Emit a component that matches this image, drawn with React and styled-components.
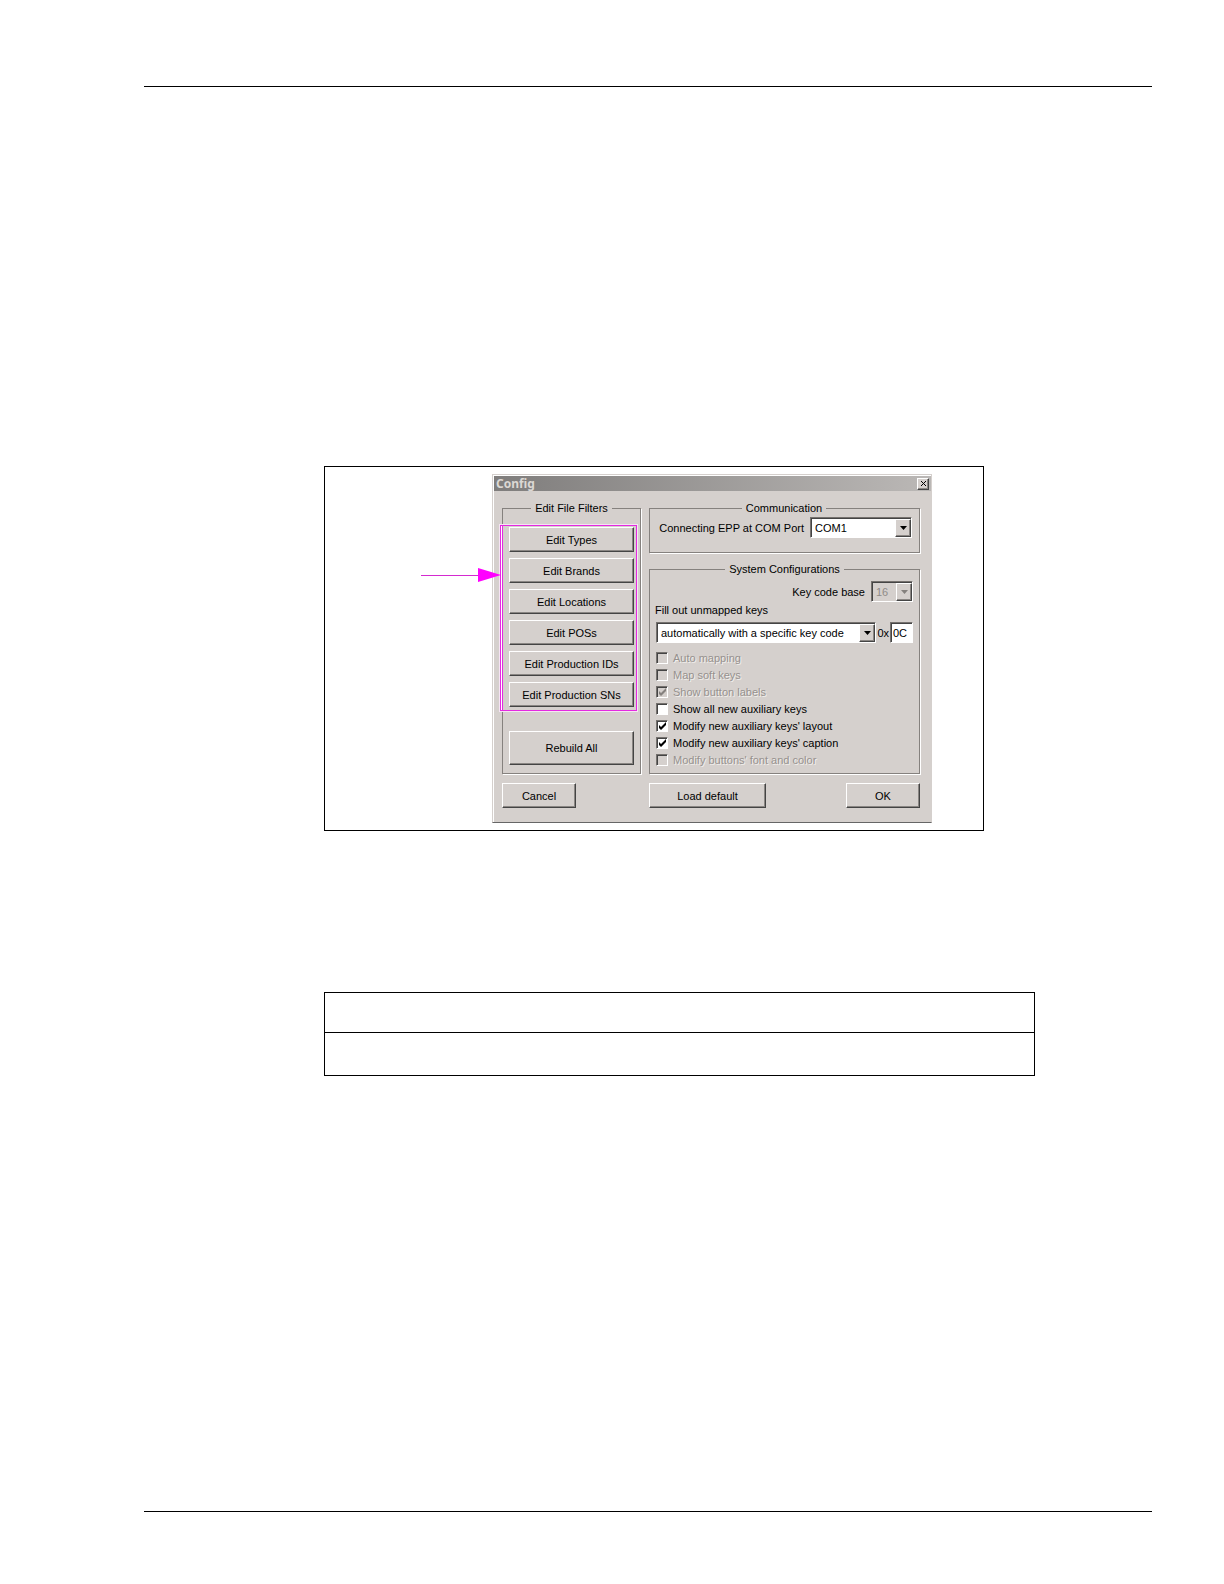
import {useState} from 'react'
import styled, {createGlobalStyle, css} from 'styled-components'

const GlobalStyle = createGlobalStyle`
  * {
    box-sizing: border-box;
  }

  body {
    margin: 0;
    background: #fff;
    color: #000;
    font-family: 'Liberation Sans', Arial, sans-serif;
    font-size: 11px;
    line-height: 14px;
  }

  button, input, select {
    font: inherit;
    color: inherit;
    margin: 0;
    border-radius: 0;
  }
`

const raised = css`
  border: 1px solid;
  border-color: #fff #444 #444 #fff;
  box-shadow: inset -1px -1px 0 #8a8683;
`

const sunken = css`
  border: 1px solid;
  border-color: #75716e #fff #fff #75716e;
  box-shadow: inset 1px 1px 0 #444;
`

const Page = styled.main`
  display: flex;
  flex-direction: column;
  min-height: 100vh;
  padding: 86px 72px 72px 144px;
`

const Rule = styled.hr`
  width: 100%;
  margin: 0;
  border: 0;
  border-top: 1px solid #000;
`

const Content = styled.div`
  flex: 1;
  padding: 379px 117px 0 180px;
`

const Figure = styled.figure`
  display: flex;
  justify-content: flex-end;
  margin: 0 51px 161px 0;
  padding: 7px 51px 7px 0;
  border: 1px solid #000;
`

const Pointer = styled.div`
  flex: 1;
  display: flex;
  justify-content: flex-end;
  min-width: 0;
  padding-top: 94px;
`

const Arrow = styled.svg`
  position: relative;
  z-index: 1;
  flex-shrink: 0;
  width: 80px;
  height: 14px;
  margin-right: -9px;
`

const Dialog = styled.section`
  flex-basis: 440px;
  border: 1px solid;
  border-color: #d5d0cd #d5d0cd #666 #d5d0cd;
  box-shadow: inset 1px 1px 0 #fff;
  background: #d5d0cd;
`

const TitleBar = styled.header`
  display: flex;
  align-items: center;
  justify-content: space-between;
  height: 15px;
  margin: 1px 0 0 1px;
  padding: 0 2px 0 2px;
  background: linear-gradient(90deg, #7f7d7c, #bbb8b6);
`

const Title = styled.h1`
  margin: 0;
  color: #dcd8d4;
  font: bold 12px/15px 'Noto Sans', sans-serif;
`

const CloseButton = styled.button`
  ${raised}
  display: flex;
  align-items: center;
  justify-content: center;
  width: 12px;
  height: 12px;
  padding: 0;
  background: #d5d0cd;
`

const Body = styled.div`
  display: grid;
  grid-template-columns: 139px 1fr;
  gap: 8px;
  padding: 10px 11px 0 9px;
`

const Column = styled.div`
  display: flex;
  flex-direction: column;
  gap: 9px;
`

const Group = styled.fieldset`
  flex: ${p => p.$grow ? 1 : 'none'};
  min-width: 0;
  margin: 0;
  padding: ${p => p.$padding};
  border: 1px solid #85817e;
  box-shadow: 1px 1px 0 #fff;
`

const Legend = styled.legend`
  margin: 0 auto;
  padding: 0 4px;
  background: #d5d0cd;
`

const Highlight = styled.div`
  display: flex;
  flex-direction: column;
  gap: 6px;
  margin: 0 3px 0 -3px;
  padding: 1px 2px 3px 8px;
  border: 1px solid #e42ae0;
  box-shadow: 0 0 0 1px #f6e4f4, inset 1px 0 0 #fff, inset 2px 0 0 #e42ae0;
`

const RebuildRow = styled.div`
  padding: 20px 6px 0 6px;
`

const Button = styled.button`
  ${raised}
  width: ${p => p.$width || '100%'};
  height: ${p => p.$height || 25}px;
  padding: 0;
  background: #d5d0cd;
`

const Field = styled.div`
  display: flex;
  align-items: center;
  justify-content: flex-end;
  gap: ${p => p.$gap || 0}px;
  white-space: nowrap;
`

const SelectBox = styled.div`
  ${sunken}
  display: flex;
  flex: ${p => p.$width ? 'none' : 1};
  width: ${p => p.$width ? `${p.$width}px` : 'auto'};
  height: 21px;
  padding: 1px;
  position: relative;
  background: ${p => p.$disabled ? '#d5d0cd' : '#fff'};
`

const Select = styled.select`
  flex: 1;
  min-width: 0;
  padding: 0 0 0 3px;
  border: 0;
  appearance: none;
  background: transparent;
  outline: none;

  &:disabled {
    color: #8f8b88;
    opacity: 1;
  }
`

const DropMark = styled.span`
  ${raised}
  position: absolute;
  top: 1px;
  right: 0;
  bottom: 0;
  display: flex;
  align-items: center;
  justify-content: center;
  width: 16px;
  background: #d5d0cd;
  pointer-events: none;
`

const CodeInput = styled.input`
  ${sunken}
  width: 23px;
  height: 21px;
  padding: 0 2px;
  background: #fff;
`

const FillLabel = styled.label`
  display: block;
  margin: 1px 0 5px -1px;
`

const Options = styled.div`
  display: flex;
  flex-direction: column;
  gap: 3px;
  margin-top: 8px;
`

const Option = styled.label`
  display: flex;
  align-items: center;
  gap: 5px;
  height: 14px;
  color: ${p => p.$disabled ? '#96918e' : '#000'};
  text-shadow: ${p => p.$disabled ? '1px 1px 0 #f2efec' : 'none'};
`

const CheckWrapper = styled.span`
  display: grid;

  > * {
    grid-area: 1 / 1;
  }
`

const Checkbox = styled.input`
  ${sunken}
  appearance: none;
  width: 12px;
  height: 12px;
  background: #fff;

  &:disabled {
    background: #d5d0cd;
  }
`

const Footer = styled.footer`
  display: grid;
  grid-template-columns: 139px 1fr auto;
  gap: 8px;
  padding: 9px 11px 14px 9px;
`

const Table = styled.table`
  width: 100%;
  border-collapse: collapse;
`

const Cell = styled.td`
  height: ${p => p.$height}px;
  padding: 0;
  border: 1px solid #000;
`

const filters = ['Edit Types', 'Edit Brands', 'Edit Locations', 'Edit POSs', 'Edit Production IDs', 'Edit Production SNs']

const initialOptions = [
  {label: 'Auto mapping', disabled: true},
  {label: 'Map soft keys', disabled: true},
  {label: 'Show button labels', disabled: true, checked: true},
  {label: 'Show all new auxiliary keys'},
  {label: 'Modify new auxiliary keys\' layout', checked: true},
  {label: 'Modify new auxiliary keys\' caption', checked: true},
  {label: 'Modify buttons\' font and color', disabled: true}
]

const DropDown = ({id, width, disabled, value}) =>
  <SelectBox $width={width} $disabled={disabled}>
    <Select id={id} disabled={disabled} defaultValue={value}>
      <option>{value}</option>
    </Select>
    <DropMark>
      <svg width='7' height='4' viewBox='0 0 7 4'>
        <path d='M0 0h7L3.5 4z' fill={disabled ? '#85817e' : '#000'}/>
      </svg>
    </DropMark>
  </SelectBox>

const CheckOption = ({label, checked, disabled, onChange}) =>
  <Option $disabled={disabled}>
    <CheckWrapper>
      <Checkbox type='checkbox' checked={!!checked} disabled={disabled} onChange={onChange}/>
      {checked &&
        <svg width='12' height='12' viewBox='0 0 12 12' pointerEvents='none'>
          <path d='M3 5v3l2 2 5-5V2L5 7z' fill={disabled ? '#85817e' : '#000'}/>
        </svg>
      }
    </CheckWrapper>
    {label}
  </Option>

const ConfigDialog = () => {
  const [options, setOptions] = useState(initialOptions)
  const toggle = label => setOptions(options.map(o => o.label === label ? {...o, checked: !o.checked} : o))

  return (
    <Dialog>
      <TitleBar>
        <Title>Config</Title>
        <CloseButton aria-label='Close'>
          <svg width='7' height='7' viewBox='0 0 7 7'>
            <path d='M1 1l5 5M6 1L1 6' stroke='#000'/>
          </svg>
        </CloseButton>
      </TitleBar>
      <Body>
        <Group $padding='10px 0 8px 0'>
          <Legend>Edit File Filters</Legend>
          <Highlight>
            {filters.map(f => <Button key={f}>{f}</Button>)}
          </Highlight>
          <RebuildRow>
            <Button $height={34}>Rebuild All</Button>
          </RebuildRow>
        </Group>
        <Column>
          <Group $padding='2px 7px 14px 6px'>
            <Legend>Communication</Legend>
            <Field $gap={6}>
              <label htmlFor='port'>Connecting EPP at COM Port</label>
              <DropDown id='port' width={102} value='COM1'/>
            </Field>
          </Group>
          <Group $grow $padding='5px 6px 0 6px'>
            <Legend>System Configurations</Legend>
            <Field $gap={6}>
              <label htmlFor='base'>Key code base</label>
              <DropDown id='base' width={42} disabled value='16'/>
            </Field>
            <FillLabel htmlFor='fill'>Fill out unmapped keys</FillLabel>
            <Field $gap={1}>
              <DropDown id='fill' value='automatically with a specific key code'/>
              <label htmlFor='code'>0x</label>
              <CodeInput id='code' defaultValue='0C'/>
            </Field>
            <Options>
              {options.map(o => <CheckOption key={o.label} {...o} onChange={() => toggle(o.label)}/>)}
            </Options>
          </Group>
        </Column>
      </Body>
      <Footer>
        <Button $width='74px'>Cancel</Button>
        <Button $width='117px'>Load default</Button>
        <Button $width='74px'>OK</Button>
      </Footer>
    </Dialog>
  )
}

const App = () =>
  <>
    <GlobalStyle/>
    <Page>
      <Rule/>
      <Content>
        <Figure>
          <Pointer>
            <Arrow viewBox='0 0 80 14'>
              <path d='M0 7.5h60' stroke='#d42ad0'/>
              <path d='M57 0l23 7-23 7z' fill='#f0f'/>
            </Arrow>
          </Pointer>
          <ConfigDialog/>
        </Figure>
        <Table>
          <tbody>
            <tr><Cell $height={40}/></tr>
            <tr><Cell $height={43}/></tr>
          </tbody>
        </Table>
      </Content>
      <Rule/>
    </Page>
  </>

export default App
